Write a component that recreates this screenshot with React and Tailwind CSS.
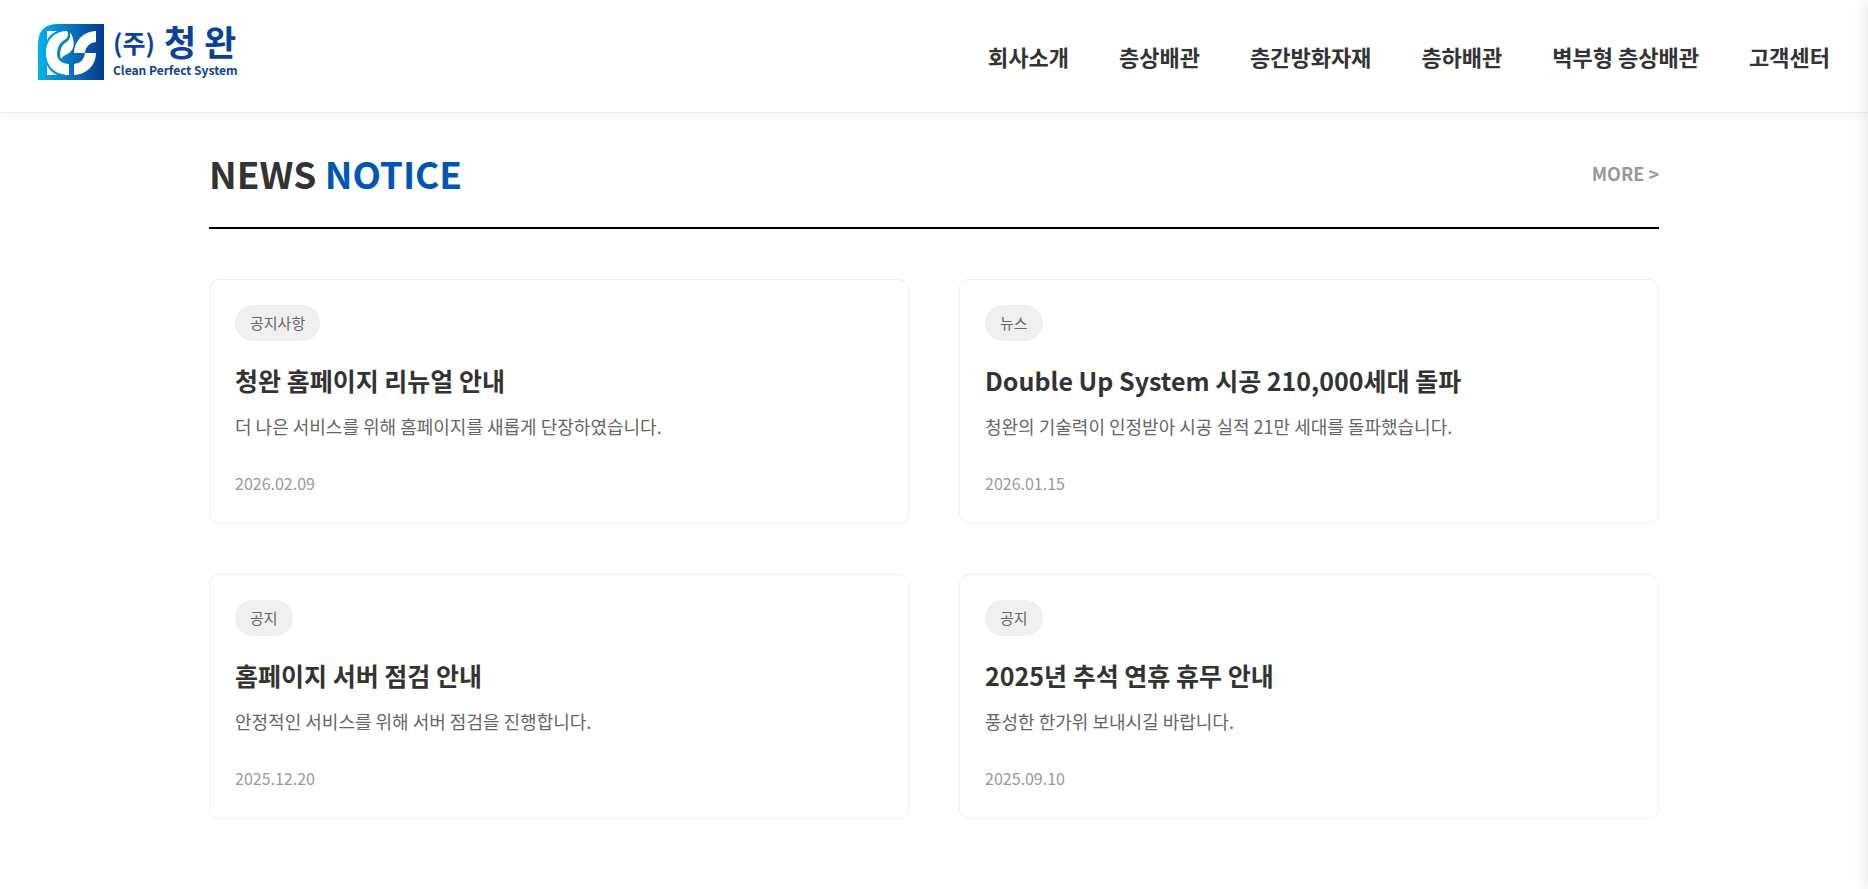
const NAV = ["회사소개", "층상배관", "층간방화자재", "층하배관", "벽부형 층상배관", "고객센터"];

const POSTS = [
  { tag: "공지사항", title: "청완 홈페이지 리뉴얼 안내", text: "더 나은 서비스를 위해 홈페이지를 새롭게 단장하였습니다.", date: "2026.02.09" },
  { tag: "뉴스", title: "Double Up System 시공 210,000세대 돌파", text: "청완의 기술력이 인정받아 시공 실적 21만 세대를 돌파했습니다.", date: "2026.01.15" },
  { tag: "공지", title: "홈페이지 서버 점검 안내", text: "안정적인 서비스를 위해 서버 점검을 진행합니다.", date: "2025.12.20" },
  { tag: "공지", title: "2025년 추석 연휴 휴무 안내", text: "풍성한 한가위 보내시길 바랍니다.", date: "2025.09.10" },
];

function Logo() {
  return (
    <svg width="204" height="60" viewBox="0 0 204 60" className="overflow-visible" role="img" aria-label="(주)청완 Clean Perfect System">
      <defs>
        <linearGradient id="mark" x1="0" y1="0" x2="1" y2="0">
          <stop offset="0" stopColor="#00b4ee" />
          <stop offset="0.5" stopColor="#0a72bd" />
          <stop offset="1" stopColor="#063a92" />
        </linearGradient>
      </defs>
      <path d="M0 56V20Q0 0 20 0H66V56Z" fill="url(#mark)" />
      <g fill="#fff">
        <path d="M9 51V41Q12 48 19 51Z" />
        <path d="M9 16V7H19Q12 10 9 16Z" />
        <path d="M29 7C16 7 8 17 8 29C8 42 17 51 31 51V40C24 40 19 36 19 30C19 23 22 18 28 15C30 13 31 10 29 7Z" />
        <path d="M32 8C36 14 37 21 34 26C31 31 26 30 23 35C21 28 23 22 27 19C31 17 33 13 32 8Z" />
        <path d="M58 7V18Q48 19 47 29H58A22 22 0 0 1 36 51V40Q46 39 47 29H36A22 22 0 0 1 58 7Z" />
      </g>
      <g fill="#0b4299">
        <text x="75" y="29" fontSize="25" fontWeight="700">(주)</text>
        <text x="126" y="32" fontSize="35" fontWeight="700">청</text>
        <text x="166" y="32" fontSize="35" fontWeight="700">완</text>
        <text x="75" y="51" fontSize="12" fontWeight="700">Clean Perfect System</text>
      </g>
    </svg>
  );
}

export default function App() {
  return (
    <div className="min-h-screen bg-white font-['Noto_Sans_CJK_KR',sans-serif] text-[#333]">
      <header className="flex h-[113px] items-center justify-between border-b border-[#eee] bg-white px-[38px] shadow-[0_2px_10px_rgba(0,0,0,0.05)]">
        <a href="#home" className="-mt-1">
          <Logo />
        </a>
        <nav>
          <ul className="flex gap-[50px]">
            {NAV.map((item) => (
              <li key={item}>
                <a href="#menu" className="block text-[22px] leading-[38px] font-bold">{item}</a>
              </li>
            ))}
          </ul>
        </nav>
      </header>

      <main className="mx-auto max-w-[1450px] pt-8 pb-[70px]">
        <div className="mb-[50px] flex items-center justify-between border-b-2 border-black pb-[26px]">
          <h2 className="text-[37px] leading-[56px] font-bold">
            NEWS <span className="text-[#0056b3]">NOTICE</span>
          </h2>
          <a href="#more" className="text-[18px] leading-[30px] font-bold text-[#999]">MORE &gt;</a>
        </div>

        <div className="grid grid-cols-2 gap-[50px]">
          {POSTS.map((post) => (
            <article key={post.title} className="rounded-[10px] border border-[#eee] p-[25px]">
              <span className="inline-block rounded-[20px] bg-[#f0f0f0] px-[15px] py-[5px] align-top text-[15px] leading-[26px] text-[#666]">{post.tag}</span>
              <h3 className="mt-[18px] text-[25px] leading-[42px] font-bold">{post.title}</h3>
              <p className="mt-[10px] text-[18px] leading-[30px] text-[#666]">{post.text}</p>
              <time className="mt-[27px] block text-[16px] leading-[30px] text-[#999]">{post.date}</time>
            </article>
          ))}
        </div>
      </main>

      <aside aria-hidden="true" className="fixed inset-y-0 left-full w-80 bg-white shadow-[-2px_0_15px_rgba(0,0,0,0.1)]" />
    </div>
  );
}
